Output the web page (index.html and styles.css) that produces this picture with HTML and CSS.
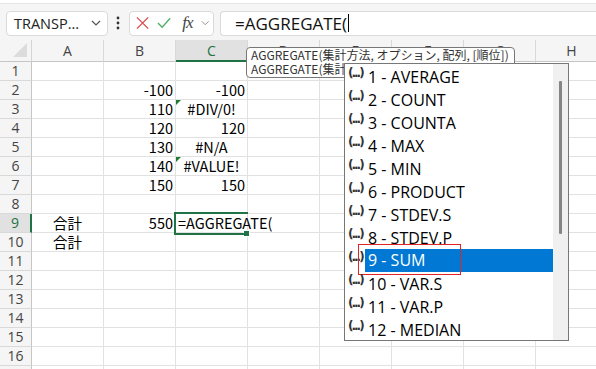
FILE: index.html
```html
<!DOCTYPE html>
<html lang="ja">
  <head>
    <meta charset="utf-8" />
    <link rel="stylesheet" href="styles.css">
    <title>AGGREGATE</title>
  </head>
  <body>
    <div class="topstrip"></div>
    <div class="toolbar">
      <div class="namebox">
        <span>TRANSP...</span>
        <svg class="chev" width="10" height="6" viewBox="0 0 10 6"><path d="M1 1l4 4 4-4" fill="none" stroke="#555" stroke-width="1.2"/></svg>
      </div>
      <svg class="more" width="4" height="14" viewBox="0 0 4 14"><circle cx="2" cy="2" r="1.4" fill="#333"/><circle cx="2" cy="7" r="1.4" fill="#333"/><circle cx="2" cy="12" r="1.4" fill="#333"/></svg>
      <div class="fxbox">
        <svg width="14" height="14" viewBox="0 0 14 14"><path d="M1 1l12 12M13 1L1 13" stroke="#e0474c" stroke-width="1.4"/></svg>
        <svg width="15" height="12" viewBox="0 0 15 12"><path d="M1 6l4.5 4.5L14 1" fill="none" stroke="#4caf65" stroke-width="1.4"/></svg>
        <span class="fx">fx</span>
        <svg class="chev" width="9" height="6" viewBox="0 0 10 6"><path d="M1 1l4 4 4-4" fill="none" stroke="#888" stroke-width="1.1"/></svg>
      </div>
      <div class="formula">=AGGREGATE(<span class="caret"></span></div>
    </div>

    <div class="sheet">
      <div class="corner"></div>
      <div class="colhead">A</div>
      <div class="colhead">B</div>
      <div class="colhead active">C</div>
      <div class="colhead">D</div>
      <div class="colhead">E</div>
      <div class="colhead">F</div>
      <div class="colhead">G</div>
      <div class="colhead">H</div>

      <div class="rowhead">1</div><div class="cell"></div><div class="cell"></div><div class="cell"></div><div class="cell"></div><div class="cell"></div><div class="cell"></div><div class="cell"></div><div class="cell"></div>
      <div class="rowhead">2</div><div class="cell"></div><div class="cell num">-100</div><div class="cell num">-100</div><div class="cell"></div><div class="cell"></div><div class="cell"></div><div class="cell"></div><div class="cell"></div>
      <div class="rowhead">3</div><div class="cell"></div><div class="cell num">110</div><div class="cell err flag">#DIV/0!</div><div class="cell"></div><div class="cell"></div><div class="cell"></div><div class="cell"></div><div class="cell"></div>
      <div class="rowhead">4</div><div class="cell"></div><div class="cell num">120</div><div class="cell num">120</div><div class="cell"></div><div class="cell"></div><div class="cell"></div><div class="cell"></div><div class="cell"></div>
      <div class="rowhead">5</div><div class="cell"></div><div class="cell num">130</div><div class="cell err">#N/A</div><div class="cell"></div><div class="cell"></div><div class="cell"></div><div class="cell"></div><div class="cell"></div>
      <div class="rowhead">6</div><div class="cell"></div><div class="cell num">140</div><div class="cell err flag">#VALUE!</div><div class="cell"></div><div class="cell"></div><div class="cell"></div><div class="cell"></div><div class="cell"></div>
      <div class="rowhead">7</div><div class="cell"></div><div class="cell num">150</div><div class="cell num">150</div><div class="cell"></div><div class="cell"></div><div class="cell"></div><div class="cell"></div><div class="cell"></div>
      <div class="rowhead">8</div><div class="cell"></div><div class="cell"></div><div class="cell"></div><div class="cell"></div><div class="cell"></div><div class="cell"></div><div class="cell"></div><div class="cell"></div>
      <div class="rowhead active">9</div><div class="cell center">合計</div><div class="cell num">550</div><div class="cell editing">=AGGREGATE(</div><div class="cell"></div><div class="cell"></div><div class="cell"></div><div class="cell"></div><div class="cell"></div>
      <div class="rowhead">10</div><div class="cell center">合計</div><div class="cell"></div><div class="cell"></div><div class="cell"></div><div class="cell"></div><div class="cell"></div><div class="cell"></div><div class="cell"></div>
      <div class="rowhead">11</div><div class="cell"></div><div class="cell"></div><div class="cell"></div><div class="cell"></div><div class="cell"></div><div class="cell"></div><div class="cell"></div><div class="cell"></div>
      <div class="rowhead">12</div><div class="cell"></div><div class="cell"></div><div class="cell"></div><div class="cell"></div><div class="cell"></div><div class="cell"></div><div class="cell"></div><div class="cell"></div>
      <div class="rowhead">13</div><div class="cell"></div><div class="cell"></div><div class="cell"></div><div class="cell"></div><div class="cell"></div><div class="cell"></div><div class="cell"></div><div class="cell"></div>
      <div class="rowhead">14</div><div class="cell"></div><div class="cell"></div><div class="cell"></div><div class="cell"></div><div class="cell"></div><div class="cell"></div><div class="cell"></div><div class="cell"></div>
      <div class="rowhead">15</div><div class="cell"></div><div class="cell"></div><div class="cell"></div><div class="cell"></div><div class="cell"></div><div class="cell"></div><div class="cell"></div><div class="cell"></div>
      <div class="rowhead">16</div><div class="cell"></div><div class="cell"></div><div class="cell"></div><div class="cell"></div><div class="cell"></div><div class="cell"></div><div class="cell"></div><div class="cell"></div>
      <div class="rowhead"></div><div class="cell"></div><div class="cell"></div><div class="cell"></div><div class="cell"></div><div class="cell"></div><div class="cell"></div><div class="cell"></div><div class="cell"></div>
    </div>

    <div class="tip">
      <div>AGGREGATE(集計方法, オプション, 配列, [順位])</div>
      <div>AGGREGATE(集計方法, オプション, 参照1, ...)</div>
    </div>

    <div class="picker">
      <ul class="items">
        <li><span class="ico">(...)</span>1 - AVERAGE</li>
        <li><span class="ico">(...)</span>2 - COUNT</li>
        <li><span class="ico">(...)</span>3 - COUNTA</li>
        <li><span class="ico">(...)</span>4 - MAX</li>
        <li><span class="ico">(...)</span>5 - MIN</li>
        <li><span class="ico">(...)</span>6 - PRODUCT</li>
        <li><span class="ico">(...)</span>7 - STDEV.S</li>
        <li><span class="ico">(...)</span>8 - STDEV.P</li>
        <li class="selected"><span class="ico">(...)</span><span class="label">9 - SUM</span><span class="mark"></span></li>
        <li><span class="ico">(...)</span>10 - VAR.S</li>
        <li><span class="ico">(...)</span>11 - VAR.P</li>
        <li><span class="ico">(...)</span>12 - MEDIAN</li>
      </ul>
      <div class="scroll"><div class="thumb"></div></div>
    </div>
  </body>
</html>
```

FILE: styles.css
```css
body {
  margin: 0;
  width: 596px;
  height: 369px;
  overflow: hidden;
  position: relative;
  background: #fff;
  font-family: "Noto Sans CJK JP", "Noto Sans", sans-serif;
}

.topstrip {
  height: 3px;
  background: #fff;
  border-bottom: 1px solid #e6e6e6;
}
.toolbar {
  height: 36px;
  background: #f5f5f5;
  display: flex;
  align-items: center;
  padding: 2px 0 0 6px;
  box-sizing: border-box;
}
.namebox,
.fxbox,
.formula {
  height: 25px;
  background: #fff;
  border: 1px solid #dadada;
  border-radius: 4px;
  box-sizing: border-box;
  display: flex;
  align-items: center;
}
.namebox {
  width: 102px;
  padding: 0 6px 0 7px;
  justify-content: space-between;
  font-family: "Open Sans", sans-serif;
  font-size: 14.5px;
  color: #222;
}
.more {
  margin: 0 9px 0 8px;
}
.fxbox {
  width: 85px;
  padding: 0 4px 0 6px;
  gap: 8px;
}
.fx {
  font-family: "Liberation Serif", serif;
  font-style: italic;
  font-size: 17px;
  color: #444;
  letter-spacing: -1px;
  margin-left: 3px;
}
.formula {
  flex: 1;
  margin-left: 6px;
  border-right: none;
  border-radius: 4px 0 0 4px;
  padding-left: 14px;
  font-family: "Open Sans", sans-serif;
  font-size: 17px;
  color: #111;
}
.caret {
  display: inline-block;
  width: 1px;
  height: 18px;
  background: #000;
  margin-left: 1px;
}

.sheet {
  display: grid;
  grid-template-columns: 32px repeat(8, 72px);
  grid-template-rows: 22px;
  grid-auto-rows: 19px;
  font-size: 14.5px;
  line-height: 18px;
}
.corner {
  background: #f5f5f5;
  border-right: 1px solid #d4d4d4;
  border-bottom: 1px solid #c6c6c6;
  position: relative;
}
.corner::after {
  content: "";
  position: absolute;
  right: 4px;
  bottom: 4px;
  border-left: 14px solid transparent;
  border-bottom: 14px solid #dcdcdc;
}
.colhead {
  background: #f5f5f5;
  border-right: 1px solid #d9d9d9;
  border-bottom: 1px solid #c6c6c6;
  text-align: center;
  color: #444;
  line-height: 21px;
  font-family: "Open Sans", sans-serif;
  font-size: 14px;
}
.colhead.active {
  background: #e1e1e1;
  color: #217346;
  border-bottom: 2px solid #217346;
}
.rowhead {
  background: #f5f5f5;
  border-right: 1px solid #c6c6c6;
  border-bottom: 1px solid #d9d9d9;
  text-align: center;
  color: #444;
  font-family: "Open Sans", sans-serif;
  font-size: 14px;
}
.rowhead.active {
  background: #e1e1e1;
  color: #217346;
  border-right: 2px solid #217346;
}
.cell {
  border-right: 1px solid #e1e1e1;
  border-bottom: 1px solid #e1e1e1;
  padding: 0 2px;
  white-space: nowrap;
  color: #000;
  position: relative;
}
.num {
  text-align: right;
}
.err,
.center {
  text-align: center;
}
.flag::before {
  content: "";
  position: absolute;
  left: 0;
  top: 0;
  border-top: 5px solid #1e7b34;
  border-right: 5px solid transparent;
}
.editing {
  overflow: visible;
  z-index: 1;
}
.editing::after {
  content: "";
  position: absolute;
  left: -2px;
  top: -2px;
  width: 72px;
  height: 19px;
  border: 2px solid #217346;
  border-right: none;
}
.editing::before {
  content: "";
  position: absolute;
  left: 68px;
  top: 17px;
  width: 5px;
  height: 5px;
  background: #217346;
  box-shadow: 0 0 0 1px #fff;
}

.tip {
  position: absolute;
  left: 246px;
  top: 47px;
  width: 269px;
  height: 31px;
  box-sizing: border-box;
  background: #fff;
  border: 1px solid #777;
  border-radius: 4px;
  padding: 0 0 0 4px;
  font-size: 12px;
  line-height: 14px;
  color: #333;
  white-space: nowrap;
  overflow: hidden;
  z-index: 2;
}

.picker {
  position: absolute;
  left: 344px;
  top: 63px;
  width: 225px;
  height: 278px;
  box-sizing: border-box;
  background: #fff;
  border: 1px solid #777;
  display: flex;
  z-index: 3;
}
.items {
  list-style: none;
  margin: 0;
  padding: 1px 0 0 3px;
  flex: 1;
}
.items li {
  height: 23px;
  display: flex;
  align-items: center;
  font-family: "Open Sans", sans-serif;
  font-size: 16px;
  color: #000;
  position: relative;
}
.ico {
  width: 19px;
  font-family: "DejaVu Sans", sans-serif;
  font-size: 12px;
  line-height: 14px;
  font-weight: bold;
  letter-spacing: -2px;
  color: #333;
  align-self: flex-start;
  margin-top: 1px;
  margin-right: 1px;
}
.items li.selected .label {
  background: #0078d4;
  color: #fff;
  flex: 1;
  height: 23px;
  line-height: 23px;
  margin-left: -3px;
  padding-left: 3px;
}
.mark {
  position: absolute;
  left: 10px;
  top: -5px;
  width: 103px;
  height: 31px;
  border: 1.5px solid #e02424;
  box-sizing: border-box;
}
.scroll {
  width: 15px;
  background: #f0f0f0;
  position: relative;
}
.thumb {
  position: absolute;
  left: 6px;
  top: 17px;
  width: 3px;
  height: 153px;
  background: #858585;
  border-radius: 1px;
}
```
